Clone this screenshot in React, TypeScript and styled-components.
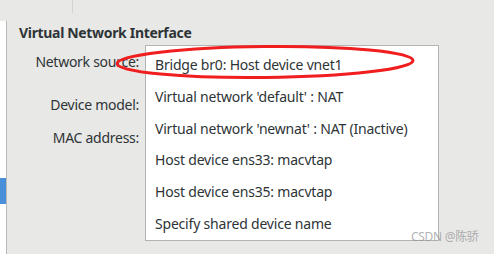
import React from 'react';
import styled, { createGlobalStyle } from 'styled-components';

const GlobalStyle = createGlobalStyle`
	html, body {
		margin: 0;
		padding: 0;
		background: #e8e8e7;
	}
	body {
		font-family: "Noto Sans", "Noto Sans CJK SC", sans-serif;
		color: #2e3436;
	}
`;

const Page = styled.div`
	position: relative;
	width: 494px;
	height: 254px;
	overflow: hidden;
	display: flex;
	flex-direction: column;
`;

const TopStrip = styled.div`
	height: 21px;
	flex-shrink: 0;
	display: flex;
	padding-left: 72px;
`;

const TabDivider = styled.div`
	width: 1px;
	height: 13px;
	background: #d3d3d0;
`;

const Body = styled.div`
	flex: 1;
	display: flex;
`;

const Sidebar = styled.div`
	width: 6px;
	background: #ffffff;
	border-right: 1px solid #b8b8b5;
	display: flex;
	flex-direction: column;
	padding-top: 157px;
`;

const SelectedRow = styled.div`
	height: 26px;
	background: #4a90d9;
`;

const Main = styled.div`
	flex: 1;
	padding: 2px 0 0 12px;
`;

const Title = styled.div`
	font-weight: bold;
	font-size: 14px;
	line-height: 20px;
	letter-spacing: -0.33px;
	color: #2e3436;
`;

const Form = styled.div`
	display: grid;
	grid-template-columns: 120px 1fr;
	margin-top: 6px;
`;

const Label = styled.div<{ $h: number }>`
	height: ${(p) => p.$h}px;
	line-height: ${(p) => p.$h}px;
	text-align: right;
	font-size: 14px;
	letter-spacing: -0.27px;
	color: #2e3436;
`;

const Field = styled.div`
	padding-left: 6px;
`;

const Popup = styled.div`
	position: absolute;
	left: 145px;
	top: 45px;
	width: 294px;
	height: 196px;
	background: #ffffff;
	border: 1px solid #b4b4b1;
	box-sizing: border-box;
	padding-top: 3px;
	display: flex;
	flex-direction: column;
`;

const Item = styled.div`
	height: 31.8px;
	line-height: 31.8px;
	padding-left: 9px;
	font-size: 14px;
	letter-spacing: -0.2px;
	color: #2e3436;
	white-space: nowrap;
`;

const Annotation = styled.svg`
	position: absolute;
	left: 0;
	top: 0;
	pointer-events: none;
`;

const Watermark = styled.div`
	position: absolute;
	left: 411px;
	top: 229px;
	font-size: 12px;
	line-height: 16px;
	color: rgba(150, 150, 150, 0.75);
	letter-spacing: -0.3px;
`;

const sources = [
	'Bridge br0: Host device vnet1',
	"Virtual network 'default' : NAT",
	"Virtual network 'newnat' : NAT (Inactive)",
	'Host device ens33: macvtap',
	'Host device ens35: macvtap',
	'Specify shared device name',
];

const App = () => {
	return (
		<>
			<GlobalStyle />
			<Page>
				<TopStrip>
					<TabDivider />
				</TopStrip>
				<Body>
					<Sidebar>
						<SelectedRow />
					</Sidebar>
					<Main>
						<Title>Virtual Network Interface</Title>
						<Form>
							<Label $h={26}>Network source:</Label>
							<Field />
							<Label $h={16}></Label>
							<Field />
							<Label $h={28}>Device model:</Label>
							<Field />
							<Label $h={38}>MAC address:</Label>
							<Field />
						</Form>
					</Main>
				</Body>
				<Popup>
					{sources.map((s) => (
						<Item key={s}>{s}</Item>
					))}
				</Popup>
				<Annotation width="494" height="254">
					<ellipse
						cx="265"
						cy="62"
						rx="148"
						ry="15.5"
						fill="none"
						stroke="#f01e1e"
						strokeWidth="3"
						transform="rotate(-0.6 265 62)"
					/>
				</Annotation>
				<Watermark>CSDN @陈骄</Watermark>
			</Page>
		</>
	);
};

export default App;
